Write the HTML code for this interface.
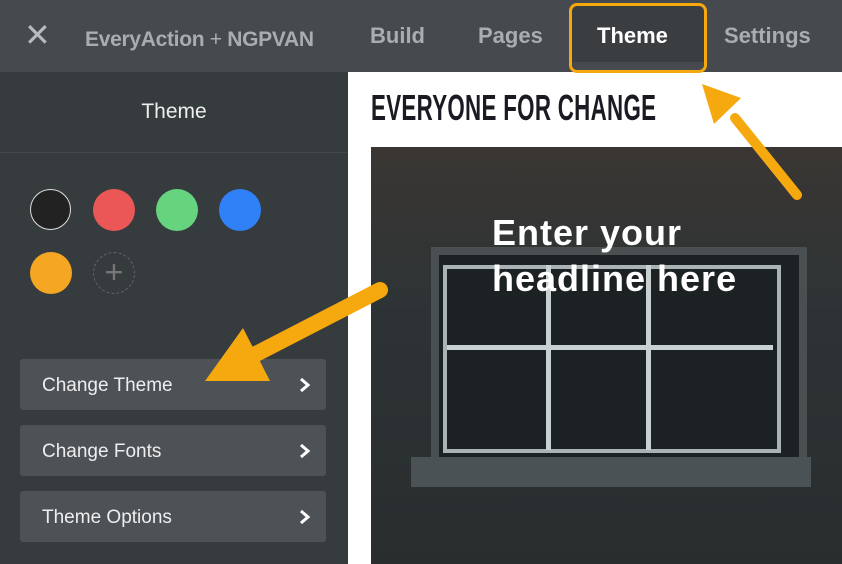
<!DOCTYPE html>
<html><head><style>
body{margin:0;width:842px;height:564px;overflow:hidden;position:relative;font-family:"Liberation Sans",sans-serif;background:#fff}
.top{position:absolute;left:0;top:0;width:842px;height:72px;background:#464a4e}
.t{position:absolute;top:23px;font-size:22px;font-weight:bold;color:#a9adb0}
.side{position:absolute;left:0;top:72px;width:348px;height:492px;background:#363b3e}
.btn{position:absolute;left:20px;width:306px;height:51px;background:#4d5257;border-radius:3px;color:#eee;font-size:19px;line-height:53px;text-indent:22px}
.btn svg{position:absolute;right:15px;top:18px}
.c{position:absolute;width:42px;height:42px;border-radius:50%}
</style></head><body>
<div class="top">
<div style="position:absolute;left:24px;top:16px;font-size:32px;color:#b8bbbd">✕</div>
<div class="t" style="left:85px;top:28px;font-size:21px;letter-spacing:-0.3px">EveryAction <span style="font-weight:normal">+</span> NGPVAN</div>
<div class="t" style="left:370px">Build</div>
<div class="t" style="left:478px">Pages</div>
<div style="position:absolute;left:569px;top:3px;width:132px;height:64px;border:3px solid #f5a90f;border-radius:8px;background:#3a3e41;overflow:hidden"><div style="position:absolute;left:0;bottom:0;width:100%;height:8px;background:#464a4e"></div></div>
<div class="t" style="left:597px;color:#fff">Theme</div>
<div class="t" style="left:724px">Settings</div>
</div>
<div class="side">
<div style="position:absolute;left:0;top:28px;width:348px;text-align:center;color:#eee;font-size:21px">Theme</div>
<div style="position:absolute;left:0;top:80px;width:348px;height:1px;background:#45494c"></div>
<div class="c" style="left:30px;top:117px;background:#222;border:1.5px solid #ddd;width:39px;height:39px"></div>
<div class="c" style="left:93px;top:117px;background:#eb5757"></div>
<div class="c" style="left:156px;top:117px;background:#66d47e"></div>
<div class="c" style="left:219px;top:117px;background:#3080f7"></div>
<div class="c" style="left:30px;top:180px;background:#f5a623"></div>
<div class="c" style="left:93px;top:180px;border:1px dashed #666;width:40px;height:40px;color:#777;font-size:32px;text-align:center;line-height:38px">+</div>
</div>
<div class="btn" style="top:359px">Change Theme<svg width="12" height="16"><path d="M2 2l7 6-7 6" stroke="#fff" stroke-width="3" fill="none"/></svg></div>
<div class="btn" style="top:425px">Change Fonts<svg width="12" height="16"><path d="M2 2l7 6-7 6" stroke="#fff" stroke-width="3" fill="none"/></svg></div>
<div class="btn" style="top:491px">Theme Options<svg width="12" height="16"><path d="M2 2l7 6-7 6" stroke="#fff" stroke-width="3" fill="none"/></svg></div>
<div style="position:absolute;left:371px;top:87px;font-size:36px;font-weight:bold;color:#1a1a22;transform:scaleX(0.62);transform-origin:left;white-space:nowrap;letter-spacing:0.5px">EVERYONE FOR CHANGE</div>
<div style="position:absolute;left:371px;top:147px;width:471px;height:417px;background:linear-gradient(180deg,#3a3633 0%,#2d3335 40%,#2a2d2e 100%);overflow:hidden">
<div style="position:absolute;left:60px;top:100px;width:360px;height:215px;border:8px solid #4a5052;background:#1c2224"></div>
<div style="position:absolute;left:72px;top:118px;width:330px;height:180px;border:4px solid #aab2b5"></div>
<div style="position:absolute;left:175px;top:118px;width:5px;height:185px;background:#c8d0d2"></div>
<div style="position:absolute;left:275px;top:118px;width:5px;height:185px;background:#c8d0d2"></div>
<div style="position:absolute;left:76px;top:198px;width:326px;height:5px;background:#c8d0d2"></div>
<div style="position:absolute;left:40px;top:310px;width:400px;height:30px;background:#4a5255"></div>
<div style="position:absolute;left:121px;top:63px;color:#fff;font-size:36px;font-weight:bold;line-height:46px;letter-spacing:1px">Enter your<br>headline here</div>
</div>
<svg width="842" height="564" style="position:absolute;left:0;top:0">
<line x1="380" y1="290" x2="250" y2="357" stroke="#f5a90f" stroke-width="16" stroke-linecap="round"/>
<polygon points="205,381 243,328 270,381" fill="#f5a90f"/>
<line x1="797" y1="195" x2="735" y2="118" stroke="#f5a90f" stroke-width="10" stroke-linecap="round"/>
<polygon points="702,84 741,98 714,124" fill="#f5a90f"/>
</svg>
</body></html>
